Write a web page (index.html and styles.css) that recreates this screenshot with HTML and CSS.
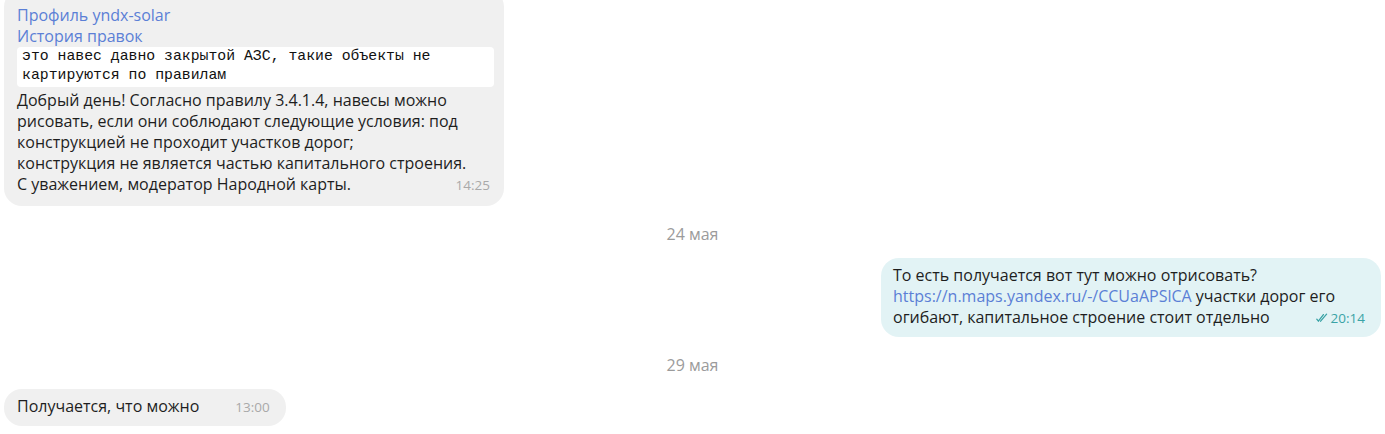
FILE: index.html
```html
<!DOCTYPE html>
<html lang="ru">
<head>
<meta charset="utf-8">
<title>Чат</title>
<link rel="stylesheet" href="styles.css">
</head>
<body>
<div class="chat">
  <div class="row row-in">
    <div class="bubble bubble-in bubble-wide bubble-first">
      <a class="link" href="#">Профиль yndx-solar</a><br>
      <a class="link" href="#">История правок</a>
      <div class="quote">это навес давно закрытой АЗС, такие объекты не<br>картируются по правилам</div>
      <div class="text">Добрый день! Согласно правилу 3.4.1.4, навесы можно<br>рисовать, если они соблюдают следующие условия: под<br>конструкцией не проходит участков дорог;<br>конструкция не является частью капитального строения.
        <div class="last"><span>С уважением, модератор Народной карты.</span><span class="time">14:25</span></div>
      </div>
    </div>
  </div>

  <div class="date">24 мая</div>

  <div class="row row-out">
    <div class="bubble bubble-out bubble-wide">
      <div class="text">То есть получается вот тут можно отрисовать?<br><a class="link" href="#">https://n.maps.yandex.ru/-/CCUaAPSlCA</a> участки дорог его
        <div class="last"><span>огибают, капитальное строение стоит отдельно</span><span class="time time-out"><svg class="ticks" width="12" height="10" viewBox="0 0 12 10"><path d="M0.8 6.2 L2.4 8.2 L7.4 1.6" fill="none" stroke="currentColor" stroke-width="1.3" stroke-linecap="round" stroke-linejoin="round"/><path d="M4.6 8.2 L10.6 1.2" fill="none" stroke="currentColor" stroke-width="1.3" stroke-linecap="round"/></svg>20:14</span></div>
      </div>
    </div>
  </div>

  <div class="date">29 мая</div>

  <div class="row row-in">
    <div class="bubble bubble-in">
      <div class="text">
        <div class="last"><span>Получается, что можно</span><span class="time">13:00</span></div>
      </div>
    </div>
  </div>
</div>
</body>
</html>
```

FILE: styles.css
```css
* {
  box-sizing: border-box;
}

html, body {
  margin: 0;
  padding: 0;
  background: #ffffff;
}

body {
  font-family: "Open Sans", "Noto Sans", sans-serif;
  font-size: 16px;
  line-height: 21px;
  color: #1e1e1e;
  overflow: hidden;
}

.chat {
  display: flex;
  flex-direction: column;
  padding: 0 4px;
}

.row {
  display: flex;
}

.row-in {
  justify-content: flex-start;
}

.row-out {
  justify-content: flex-end;
}

.bubble {
  border-radius: 18px;
  padding: 7px 16px 8px 13px;
  white-space: nowrap;
}

.bubble-wide {
  width: 500px;
  padding-right: 14px;
}

.bubble-first {
  margin-top: -11px;
  padding-top: 16px;
  padding-bottom: 10px;
}

.bubble-in {
  background: #f0f0f0;
}

.bubble-out {
  background: #e2f3f5;
  padding-left: 12px;
  padding-right: 16px;
}

.link {
  color: #5b7fd6;
  text-decoration: none;
}

.quote {
  background: #ffffff;
  border-radius: 4px;
  margin: 0 -4px 3px 0;
  padding: 0 5px 2px;
  font-family: "Liberation Mono", "DejaVu Sans Mono", monospace;
  font-size: 14.8px;
  line-height: 19px;
  color: #111111;
}

.last {
  display: flex;
  justify-content: space-between;
  align-items: baseline;
}

.time {
  margin-left: 36px;
  font-size: 13.5px;
  color: #a9a9a9;
  display: inline-flex;
  align-items: center;
  gap: 3px;
}

.time-out {
  color: #3aa3a6;
}

.ticks {
  display: block;
}

.date {
  text-align: center;
  padding: 18px 0 14px;
  line-height: 20px;
  font-size: 16px;
  color: #9b9b9b;
}
```
